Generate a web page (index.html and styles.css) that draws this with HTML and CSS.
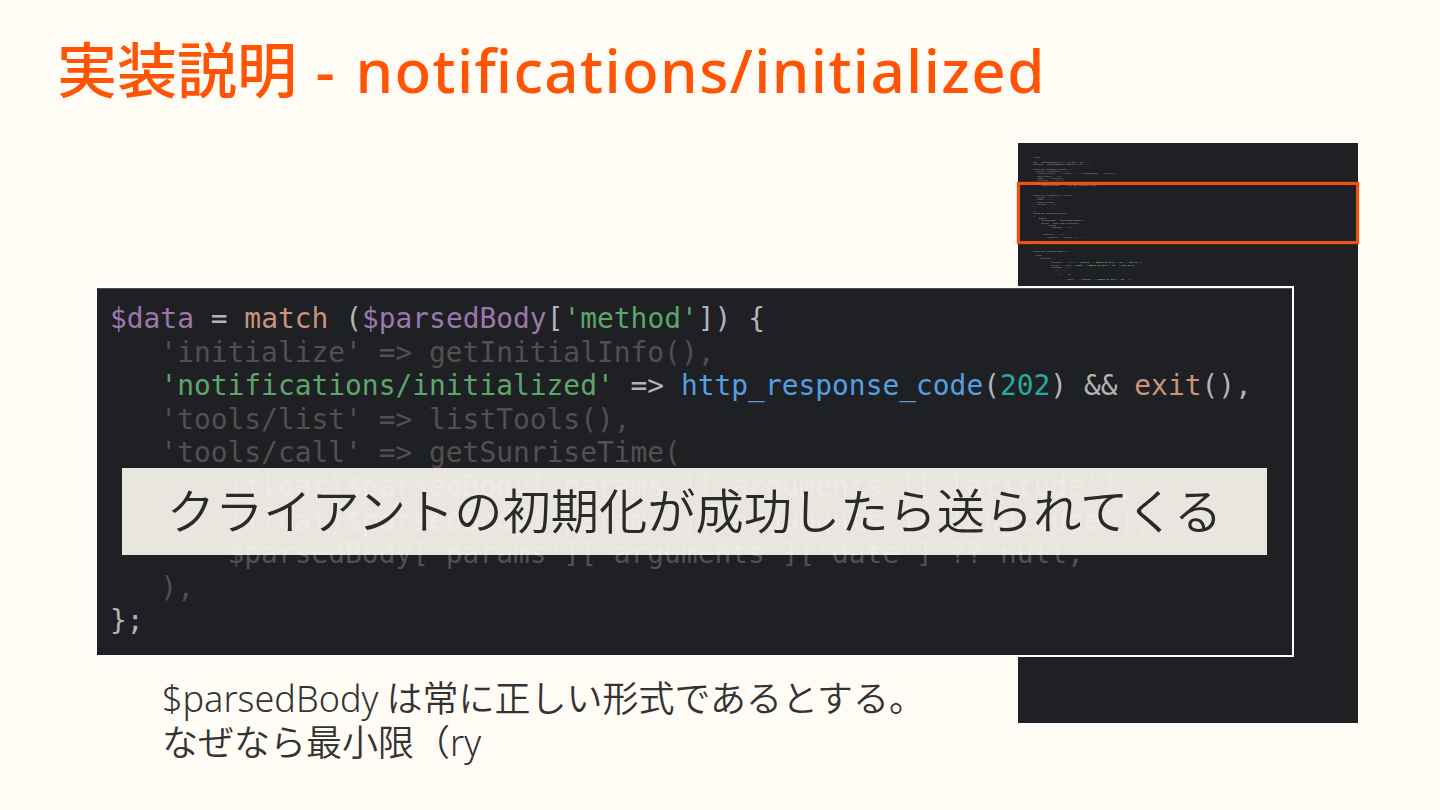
FILE: index.html
```html
<!DOCTYPE html>
<html lang="ja">
<head>
<meta charset="utf-8">
<title>実装説明</title>
<link rel="stylesheet" href="styles.css">
</head>
<body>
<main class="slide">
  <h1 class="title">実装説明<span class="title-dash"> - </span><span class="title-latin">notifications/initialized</span></h1>
  <div class="thumb">
    <pre class="thumb-code">&lt;?php

$id = $parsedBody['id'] ?? null; $m = 1;
$method = $parsedBody['method'] ?? '';

function getInitialInfo() {
  return ['protocol' =&gt; 1,
  'capabilities' =&gt; ['tools' =&gt; ['listChanged' =&gt; false]],
  'serverInfo' =&gt; [],
  'name' =&gt; 'sunrise',
  'version' =&gt; '0.1.0',

     'instructions' =&gt; 'Get the sunrise time',

}

function listTools(): array {
  'tools' =&gt; [
  'name' =&gt; 1,
  'description' =&gt; '',
  'schema' =&gt; [],
}

];
function getSunriseTime(
{
    $date,
      $timestamp = strtotime($date);
      $info = date_sun_info($ts);
          return
            'content' =&gt; [],


      'sunrise' =&gt; [],
         'isError' =&gt; false, 'a' =&gt; 1,



}

function respond($data) {

  echo
     json_en

            'jsonrpc' =&gt; '2.0', <span class="thumb-green">'result' =&gt; $data ?? null, 'id' =&gt; $id ?? 1,</span>
            'error' =&gt; null, <span class="thumb-green">'code' =&gt; $data ?? null, 'id' =&gt; $id ?? 2,</span>
            'message' =&gt; 1,
               'x' =&gt; 1,

                  'y' =&gt; 2,

                       'data' =&gt; <span class="thumb-green">'result' =&gt; $data ?? null, 'id' =&gt; 1</span></pre>
    <div class="thumb-mark"></div>
  </div>
  <div class="code-card">
    <pre class="code"><span class="var">$data</span> <span class="pl">=</span> <span class="fn">match</span> <span class="pl">(</span><span class="var">$parsedBody</span><span class="pl">[</span><span class="str">'method'</span><span class="pl">]) {</span>
<span class="dim">   'initialize' =&gt; getInitialInfo(),</span>
   <span class="str">'notifications/initialized'</span> <span class="pl">=&gt;</span> <span class="call">http_response_code</span><span class="pl">(</span><span class="num">202</span><span class="pl">) &amp;&amp;</span> <span class="fn">exit</span><span class="pl">(),</span>
<span class="dim">   'tools/list' =&gt; listTools(),</span>
<span class="dim">   'tools/call' =&gt; getSunriseTime(</span>
<span class="dim">       (float)$parsedBody['params']['arguments']['latitude'],</span>
<span class="dim">       (float)$parsedBody['params']['arguments']['longitude'],</span>
<span class="dim">       $parsedBody['params']['arguments']['date'] ?? null,</span>
<span class="dim">   ),</span>
<span class="pl">};</span></pre>
    <div class="banner">クライアントの初期化が成功したら送られてくる</div>
  </div>
  <p class="note"><span class="note-latin">$parsedBody</span> は常に正しい形式であるとする。<br>なぜなら最小限（<span class="note-latin">ry</span></p>
</main>
</body>
</html>
```
FILE: styles.css
```css
html, body { margin: 0; padding: 0; }
body { width: 1440px; height: 810px; overflow: hidden; background: #fffcf5; }
.slide { position: relative; width: 1440px; height: 810px; background: #fffcf5; font-family: "Noto Sans", "Noto Sans CJK JP", sans-serif; overflow: hidden; }
.title { margin: 0; padding: 32px 0 0 57px; font-family: "Noto Sans", "Noto Sans CJK JP", sans-serif; font-size: 60px; line-height: 76px; font-weight: 500; color: #ff5405; white-space: nowrap; }
.title-dash { margin-left: 3px; margin-right: 5px; }
.title-latin { font-variant-ligatures: common-ligatures; font-feature-settings: "liga" 1; letter-spacing: 1.4px; }
.thumb { position: absolute; left: 1018px; top: 143px; width: 340px; height: 580px; background: #1e2024; }
.thumb-code { margin: 0; padding: 14px 0 0 15px; font-family: "Liberation Mono", monospace; font-size: 2.4px; line-height: 2.35px; color: #a5a8a6; }
.thumb-green { color: #a8e0b6; }
.thumb-mark { position: absolute; left: -1px; top: 39px; width: 336px; height: 56px; border: 3px solid #ee5410; box-shadow: 0 0 1px #ee5410; }
.code-card { position: absolute; left: 95px; top: 286px; width: 1195px; height: 367px; background: #1e2024; border: 2px solid #fff; box-shadow: inset 0 1px 0 #4a4a4a; }
.code { margin: 0; padding: 14px 0 0 13px; font-family: "DejaVu Sans Mono", monospace; font-size: 27.9px; line-height: 33.6px; color: #bbb; }
.var { color: #9a78ad; }
.fn { color: #c9947a; }
.pl { color: #b4b4b4; }
.str { color: #5ea56c; }
.call { color: #539fe2; }
.num { color: #2aa9a2; }
.dim { color: #505050; }
.banner { position: absolute; left: 25px; top: 180px; width: 1145px; height: 87px; padding-bottom: 8px; box-sizing: border-box; display: flex; align-items: center; justify-content: center; background: rgba(255,252,245,.9); color: #2a2a2a; font-family: "Noto Sans CJK JP", sans-serif; font-weight: 350; font-size: 48.25px; white-space: nowrap; }
.note { position: absolute; left: 162px; top: 674px; margin: 0; font-family: "Noto Sans CJK JP", sans-serif; font-weight: 350; font-size: 36px; line-height: 44px; color: #333; }
.note-latin { font-family: "Noto Sans", sans-serif; font-weight: 300; line-height: 0; }
```
